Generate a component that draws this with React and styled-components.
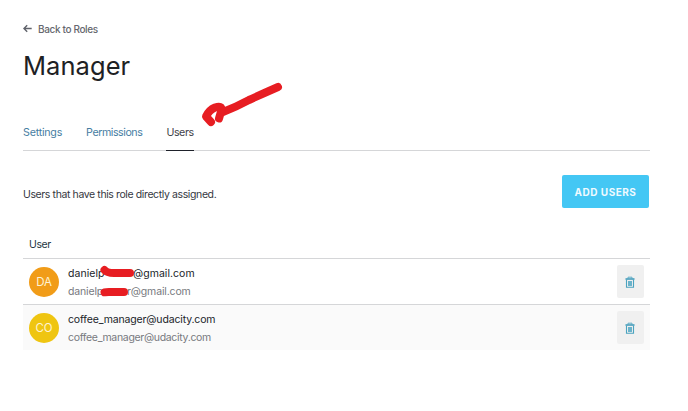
import React from "react";
import styled, { createGlobalStyle } from "styled-components";

const GlobalStyle = createGlobalStyle`
  * { box-sizing: border-box; }
  body { margin: 0; background: #fff; font-family: Inter, "Liberation Sans", sans-serif; }
`;

const Page = styled.main`
  position: relative;
  width: 688px;
  height: 411px;
  padding: 19px 38px 0 23px;
  overflow: hidden;
  color: #25282c;
  white-space: nowrap;
`;

const BackLink = styled.a`
  display: flex;
  align-items: center;
  gap: 6px;
  height: 20px;
  font-size: 10px;
  font-weight: 500;
  letter-spacing: -0.36px;
  color: #65676e;
  svg { display: block; margin-top: -2px; }
`;

const Title = styled.h1`
  margin: 9px 0 0;
  height: 36px;
  line-height: 36px;
  font-size: 25.5px;
  font-weight: 400;
  letter-spacing: 0.05px;
  color: #1e2124;
`;

const Tabs = styled.nav`
  display: flex;
  gap: 24px;
  height: 37px;
  margin-top: 30px;
  border-bottom: 1px solid #d5d6d8;
`;

const Tab = styled.a`
  height: 37px;
  line-height: 37px;
  font-size: 10.7px;
  letter-spacing: ${(p) => p.$spacing}px;
  color: ${(p) => (p.$active ? "#3f4249" : "#467da2")};
  border-bottom: 1px solid ${(p) => (p.$active ? "#1e212a" : "transparent")};
`;

const Toolbar = styled.div`
  display: flex;
  align-items: center;
  justify-content: space-between;
  height: 33px;
  margin-top: 24px;
  padding-right: 1px;
`;

const Description = styled.p`
  margin: 6px 0 0;
  line-height: 16px;
  font-size: 10.5px;
  letter-spacing: -0.39px;
  color: #35383f;
`;

const AddButton = styled.button`
  width: 87px;
  height: 33px;
  padding: 0;
  border: 0;
  border-radius: 2px;
  background: #44c7f4;
  color: #effaff;
  font: 700 10px Inter, sans-serif;
  letter-spacing: 0.5px;
`;

const TableHeader = styled.div`
  height: 28px;
  margin-top: 22px;
  padding-left: 6px;
  line-height: 29px;
  font-size: 10.5px;
  letter-spacing: -0.4px;
  color: #24363f;
`;

const Row = styled.div`
  display: flex;
  align-items: center;
  height: 46px;
  padding: 0 6px;
  border-top: 1px solid #d5d6d8;
  background: ${(p) => (p.$shaded ? "#fafafa" : "#fff")};
`;

const Avatar = styled.div`
  width: 30px;
  height: 30px;
  border-radius: 50%;
  background: ${(p) => p.$color};
  color: #fff3d3;
  font-size: 11.5px;
  font-weight: 400;
  letter-spacing: -0.2px;
  line-height: 30px;
  text-align: center;
`;

const Identity = styled.div`
  flex: 1;
  margin: 2px 0 0 9px;
`;

const Email = styled.div`
  display: flex;
  height: 18px;
  line-height: 18px;
  font-size: 10.5px;
  letter-spacing: ${(p) => p.$spacing}px;
  color: ${(p) => (p.$muted ? "#77797e" : "#202329")};
`;

const EmailStart = styled.span`
  width: ${(p) => p.$width}px;
`;

const DeleteButton = styled.button`
  display: grid;
  place-items: center;
  width: 27px;
  height: 33px;
  padding: 0 1px 0 0;
  border: 0;
  border-radius: 2px;
  background: #f0f0f0;
`;

const Marks = styled.svg`
  position: absolute;
  inset: 0;
  pointer-events: none;
`;

const ArrowLeft = () => (
  <svg width="9" height="9" viewBox="0 0 9 9" fill="none" stroke="#5f626a" strokeWidth="1.4">
    <path d="M8.7 4.5H1M4.2 1.2.9 4.5l3.3 3.3" />
  </svg>
);

const Trash = () => (
  <svg width="10" height="12" viewBox="0 0 10 12" fill="none">
    <path d="M3 2.5V1.2h4v1.3" stroke="#61aec7" />
    <path d="M.5 3h9" stroke="#3c99b8" strokeWidth="1.5" />
    <path d="M1.5 3.5v7.7h7V3.5" stroke="#4ba3bf" strokeWidth="1.1" />
    <path d="M3 5h4v5H3z" fill="#79bbcf" />
    <path d="M4 5v5M6 5v5" stroke="#55a8c2" strokeWidth=".7" />
  </svg>
);

export default function App() {
  return (
    <Page>
      <GlobalStyle />
      <BackLink><ArrowLeft />Back to Roles</BackLink>
      <Title>Manager</Title>
      <Tabs>
        <Tab $spacing={-0.23}>Settings</Tab>
        <Tab $spacing={-0.46}>Permissions</Tab>
        <Tab $active $spacing={-0.44}>Users</Tab>
      </Tabs>
      <Toolbar>
        <Description>Users that have this role directly assigned.</Description>
        <AddButton>ADD USERS</AddButton>
      </Toolbar>
      <TableHeader>User</TableHeader>
      <Row>
        <Avatar $color="#f19c18">DA</Avatar>
        <Identity>
          <Email $spacing={0.04}><EmailStart $width={65}>danielp</EmailStart>@gmail.com</Email>
          <Email $muted $spacing={-0.15}><EmailStart $width={59}>danielp</EmailStart>r@gmail.com</Email>
        </Identity>
        <DeleteButton aria-label="Delete user"><Trash /></DeleteButton>
      </Row>
      <Row $shaded>
        <Avatar $color="#efc511">CO</Avatar>
        <Identity>
          <Email $spacing={-0.15}>coffee_manager@udacity.com</Email>
          <Email $muted $spacing={-0.32}>coffee_manager@udacity.com</Email>
        </Identity>
        <DeleteButton aria-label="Delete user"><Trash /></DeleteButton>
      </Row>
      <Marks width="688" height="411" viewBox="0 0 688 411" fill="none" stroke="#e71d22" strokeLinecap="round" strokeLinejoin="round">
        <path d="M278 87Q262 94 249 100Q236 107 223 112" strokeWidth="8" />
        <path d="M211 122L206 116.5Q209 110 215 107.5Q222 105 221.5 110L219 118.5" strokeWidth="8" />
        <path d="M104.500 270Q107 273 114 273H130" strokeWidth="8" />
        <path d="M104.500 292.300Q107 291.700 112 292H124" strokeWidth="8" />
      </Marks>
    </Page>
  );
}
